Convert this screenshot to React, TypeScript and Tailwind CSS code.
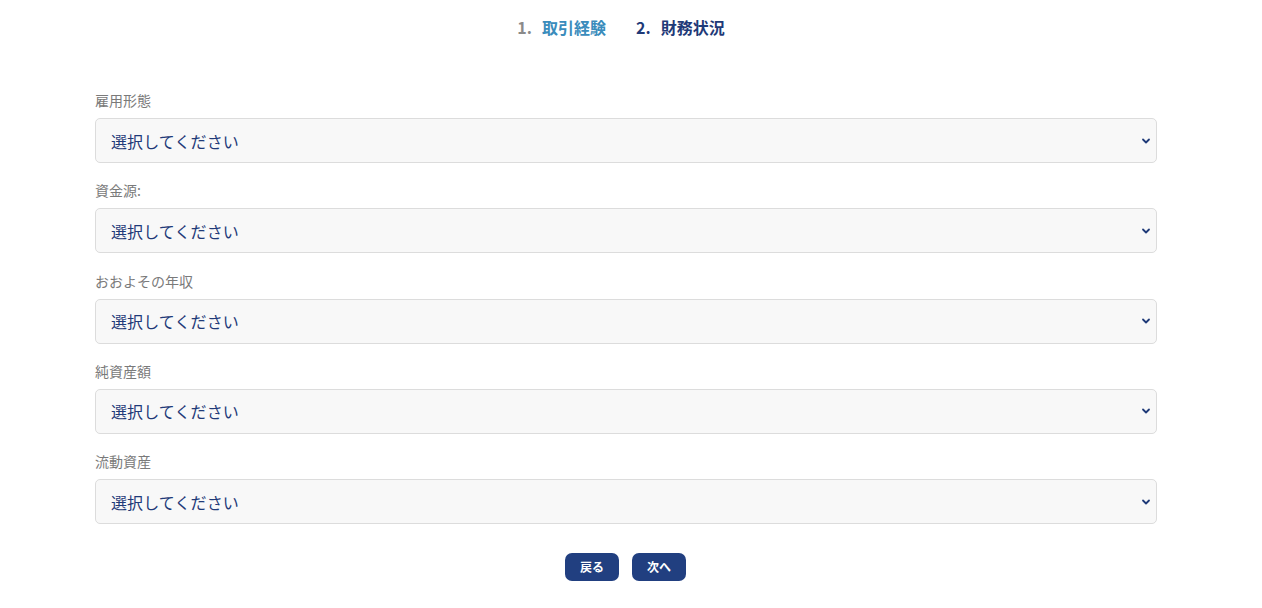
import React from "react";

const fields = ["雇用形態", "資金源:", "おおよその年収", "純資産額", "流動資産"];

function Field({ label }: { label: string }) {
  return (
    <div className="flex flex-col">
      <label className="text-[14px] leading-[20px] text-[#7a7a7a] mb-[8px]">{label}</label>
      <div className="relative">
        <select
          defaultValue=""
          className="appearance-none w-full h-[45px] rounded-[5px] border border-[#dcdcdc] bg-[#f8f8f8] pl-[15px] pr-[30px] text-[16px] tracking-[0.1px] text-[#1f3a78] outline-none"
        >
          <option value="">選択してください</option>
        </select>
        <svg
          className="pointer-events-none absolute right-[6px] top-1/2 -translate-y-1/2"
          width="10"
          height="10"
          viewBox="0 0 10 10"
        >
          <path d="M2 3.5 L5 6.5 L8 3.5" fill="none" stroke="#1f3a78" strokeWidth="1.8" strokeLinecap="round" strokeLinejoin="round" />
        </svg>
      </div>
    </div>
  );
}

export default function App() {
  return (
    <div
      className="w-[1262px] min-h-[608px] bg-white"
      style={{ fontFamily: '"Noto Sans CJK JP", "Noto Sans", "Liberation Sans", sans-serif' }}
    >
      <div className="flex justify-center pt-[15px] gap-[30px] text-[16px] font-bold leading-[24px] mr-[20px]">
        <div className="flex items-center gap-[10px]">
          <span className="text-[#8a8a8a]">1.</span>
          <span className="text-[#3a8cbc]">取引経験</span>
        </div>
        <div className="flex items-center gap-[10px]">
          <span className="text-[#1f3a78]">2.</span>
          <span className="text-[#1f3a78]">財務状況</span>
        </div>
      </div>
      <div className="ml-[95px] w-[1062px] mt-[51px] flex flex-col gap-[17.25px]">
        {fields.map((f) => (
          <Field key={f} label={f} />
        ))}
      </div>
      <div className="flex justify-center gap-[13px] mt-[29px] ml-[-11px]">
        <button className="w-[54px] h-[28px] rounded-[7px] bg-[#213f80] text-white text-[12px] font-bold">戻る</button>
        <button className="w-[54px] h-[28px] rounded-[7px] bg-[#213f80] text-white text-[12px] font-bold">次へ</button>
      </div>
    </div>
  );
}
